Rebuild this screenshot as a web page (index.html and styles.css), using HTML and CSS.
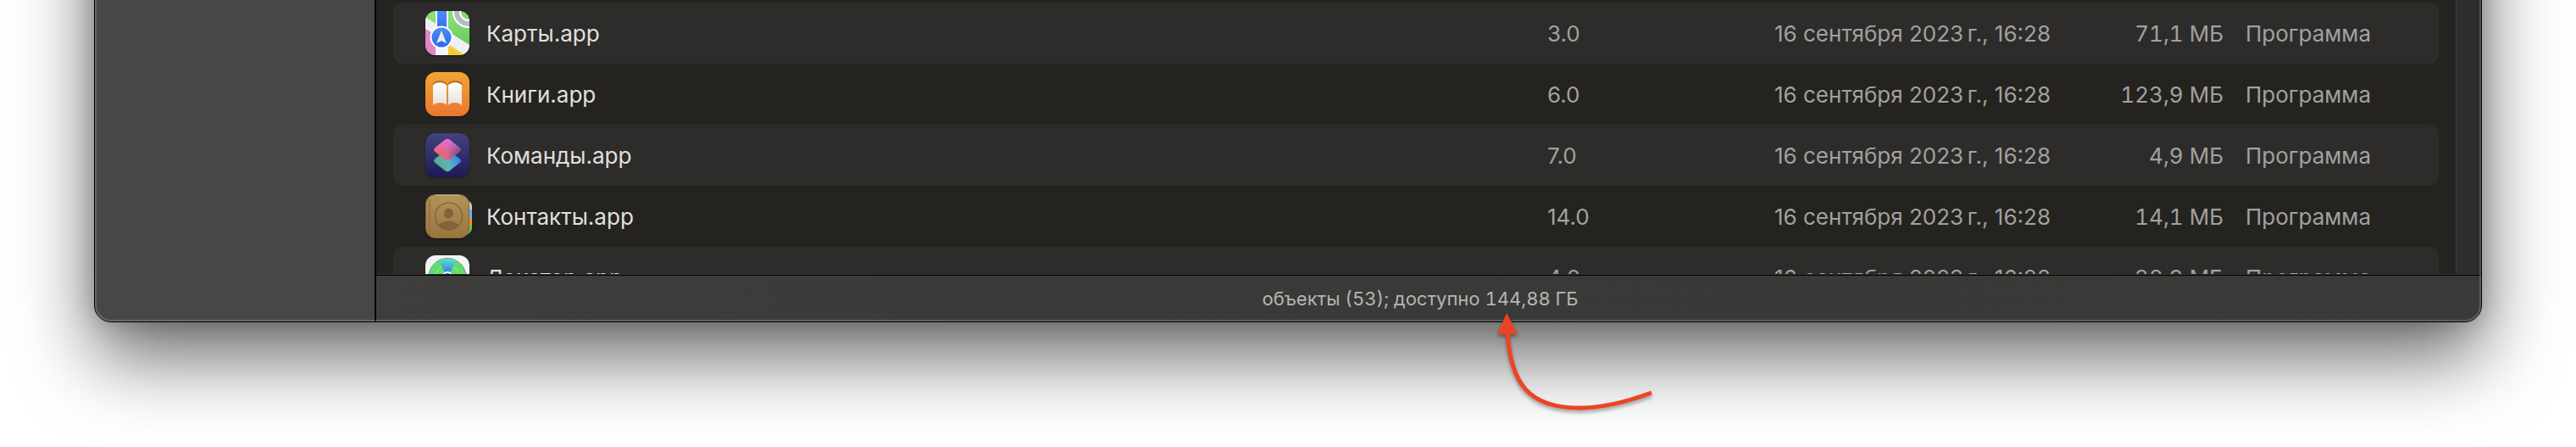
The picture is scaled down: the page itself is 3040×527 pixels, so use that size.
FILE: index.html
```html
<!DOCTYPE html>
<html lang="ru">
<head>
<meta charset="utf-8">
<title>Программы</title>
<link rel="stylesheet" href="styles.css">
</head>
<body>
<main class="window">
  <aside class="sidebar"></aside>
  <section class="content">
    <div class="browser">
      <div class="list">
        <table class="files">
          <colgroup>
            <col>
            <col class="col-version">
            <col class="col-date">
            <col class="col-size">
            <col class="col-kind">
          </colgroup>
          <tbody>
            <tr>
              <td><div class="name">
                <svg class="icon" viewBox="0 0 52 52" aria-hidden="true">
                  <defs>
                    <clipPath id="tile"><rect width="52" height="52" rx="12"/></clipPath>
                    <linearGradient id="mapGreen" x1="0" y1="0" x2="0" y2="1"><stop offset="0" stop-color="#8ee27c"/><stop offset="1" stop-color="#5fc45a"/></linearGradient>
                    <linearGradient id="mapBlue" x1="0" y1="0" x2="0" y2="1"><stop offset="0" stop-color="#4d8ff5"/><stop offset="1" stop-color="#2468f2"/></linearGradient>
                  </defs>
                  <g clip-path="url(#tile)">
                    <rect width="52" height="52" fill="url(#mapGreen)"/>
                    <path d="M26 38 48 52H26Z" fill="#f5cc38"/>
                    <path d="M0 7 52 40V52H47L0 22Z" fill="#f0eff4"/>
                    <path d="M12 0h15v52H12Z" fill="#f3f3f7"/>
                    <path d="M0 21 12 28V52H0Z" fill="#dd86c8"/>
                    <path d="M14 0h11v26H14Z" fill="url(#mapBlue)"/>
                    <circle cx="51" cy="1" r="18" fill="#b9b9c2" stroke="#fff" stroke-width="2"/>
                    <circle cx="51" cy="1" r="10" fill="#7bd96c" stroke="#fff" stroke-width="2"/>
                    <circle cx="19" cy="31" r="12.500" fill="url(#mapBlue)" stroke="#fff" stroke-width="2"/>
                    <path d="M19 23 25 38 19 35 13 38Z" fill="#ececf0"/>
                  </g>
                </svg>
                <span>Карты.app</span></div></td>
              <td>3.0</td><td>16 сентября 2023&#8239;г., 16:28</td><td class="size">71,1 МБ</td><td>Программа</td>
            </tr>
            <tr>
              <td><div class="name">
                <svg class="icon" viewBox="0 0 52 52" aria-hidden="true">
                  <defs>
                    <linearGradient id="bookTile" x1="0" y1="0" x2="0" y2="1"><stop offset="0" stop-color="#f1a535"/><stop offset="1" stop-color="#e97730"/></linearGradient>
                    <linearGradient id="page" x1="0" y1="0" x2="0" y2="1"><stop offset="0" stop-color="#fff"/><stop offset="1" stop-color="#e6e1dc"/></linearGradient>
                  </defs>
                  <rect width="52" height="52" rx="12" fill="url(#bookTile)"/>
                  <path d="M9 15c3-5 13-5 16 0M27 15c3-5 13-5 16 0" fill="none" stroke="#b8641c" stroke-width="2"/>
                  <path d="M9 16c2-5 14-5 16 0v23c-3-4-12-4-16 0ZM27 16c2-5 14-5 16 0v23c-4-4-13-4-16 0Z" fill="url(#page)"/>
                </svg>
                <span>Книги.app</span></div></td>
              <td>6.0</td><td>16 сентября 2023&#8239;г., 16:28</td><td class="size">123,9 МБ</td><td>Программа</td>
            </tr>
            <tr>
              <td><div class="name">
                <svg class="icon" viewBox="0 0 52 52" aria-hidden="true">
                  <defs>
                    <linearGradient id="cmdTile" x1="0" y1="0" x2="0" y2="1"><stop offset="0" stop-color="#42437a"/><stop offset="1" stop-color="#1d1a58"/></linearGradient>
                    <linearGradient id="cmdTop" x1="0" y1=".5" x2="1" y2=".5"><stop offset="0" stop-color="#f46a63"/><stop offset=".5" stop-color="#d9688e"/><stop offset="1" stop-color="#6c4a80"/></linearGradient>
                    <linearGradient id="cmdGlow" x1="0" y1="0" x2="0" y2="1"><stop offset="0" stop-color="#e56be8"/><stop offset=".6" stop-color="#e56be8" stop-opacity="0"/></linearGradient>
                    <linearGradient id="cmdLow" x1="0" y1=".7" x2="1" y2=".4"><stop offset="0" stop-color="#55a590"/><stop offset=".5" stop-color="#62b5b5"/><stop offset="1" stop-color="#2f7bff"/></linearGradient>
                  </defs>
                  <rect width="52" height="52" rx="12" fill="url(#cmdTile)"/>
                  <path d="M23 21.500 11.500 30q-3 2.500 0 5L23 44q3 2.500 6 0l11.500-9q3-2.500 0-5L29 21.500q-3-2-6 0Z" fill="url(#cmdLow)"/>
                  <path d="M23 8 11.500 17q-3 2.500 0 5L23 31q3 2.500 6 0l11.500-9q3-2.500 0-5L29 8q-3-2.500-6 0Z" fill="url(#cmdTop)"/>
                  <path d="M23 8 11.500 17q-3 2.500 0 5L23 31q3 2.500 6 0l11.500-9q3-2.500 0-5L29 8q-3-2.500-6 0Z" fill="url(#cmdGlow)"/>
                </svg>
                <span>Команды.app</span></div></td>
              <td>7.0</td><td>16 сентября 2023&#8239;г., 16:28</td><td class="size">4,9 МБ</td><td>Программа</td>
            </tr>
            <tr>
              <td><div class="name">
                <svg class="icon" viewBox="0 0 52 52" aria-hidden="true">
                  <defs>
                    <linearGradient id="leather" x1="0" y1="0" x2="0" y2="1"><stop offset="0" stop-color="#b2925a"/><stop offset="1" stop-color="#9c743f"/></linearGradient>
                    <clipPath id="badge"><circle cx="27.500" cy="26" r="16"/></clipPath>
                  </defs>
                  <path d="M46 6q9 2 9 8v4h-9Z" fill="#c9c9c4"/>
                  <path d="M46 18h9v10h-9Z" fill="#64b4ea"/>
                  <path d="M46 28h9v9h-9Z" fill="#ec9422"/>
                  <path d="M46 37h9v4q-1 5-9 8Z" fill="#5dc655"/>
                  <rect width="52" height="52" rx="12" fill="#86663a"/>
                  <rect x="1" y="1" width="50" height="50" rx="11" fill="url(#leather)"/>
                  <path d="M12 1h28" stroke="#c9bda0" stroke-width="1"/>
                  <path d="M5 6v40" stroke="#8e6f3f" stroke-width="1.500"/>
                  <g clip-path="url(#badge)" fill="#80653a">
                    <ellipse cx="27.500" cy="22.500" rx="5.500" ry="6"/>
                    <ellipse cx="27.500" cy="40" rx="13" ry="8.500"/>
                  </g>
                  <circle cx="27.500" cy="26" r="16" fill="none" stroke="#7b6036" stroke-width="1.200"/>
                </svg>
                <span>Контакты.app</span></div></td>
              <td>14.0</td><td>16 сентября 2023&#8239;г., 16:28</td><td class="size">14,1 МБ</td><td>Программа</td>
            </tr>
            <tr>
              <td><div class="name">
                <svg class="icon" viewBox="0 0 52 52" aria-hidden="true">
                  <defs><linearGradient id="beam" x1="0" y1="0" x2="0" y2="1"><stop offset="0" stop-color="#5fe0c8"/><stop offset="1" stop-color="#1f58f5"/></linearGradient></defs>
                  <rect width="52" height="52" rx="12" fill="#f4f4f4"/>
                  <circle cx="26" cy="25.500" r="22" fill="#63dc6c" stroke="#4fae66" stroke-width="1"/>
                  <circle cx="26" cy="25.500" r="14" fill="none" stroke="#8fee90" stroke-width="1"/>
                  <path d="M26 27 16 6q10-4 20 0Z" fill="url(#beam)"/>
                  <circle cx="26" cy="25" r="5" fill="#2563f5" stroke="#fff" stroke-width="2"/>
                </svg>
                <span>Локатор.app</span></div></td>
              <td>4.0</td><td>16 сентября 2023&#8239;г., 16:28</td><td class="size">38,9 МБ</td><td>Программа</td>
            </tr>
          </tbody>
        </table>
      </div>
      <div class="scroller"></div>
    </div>
    <footer class="status">
      <span class="status-text">объекты (53); доступно 144,88 ГБ
        <svg class="arrow" viewBox="0 0 200 130" aria-hidden="true">
          <path d="M19 29C23 88 44 117 104 117C132 117 159 110 189 99" fill="none" stroke="#ec4424" stroke-width="5"/>
          <path d="M18 5 31 30H7Z" fill="#ec4424"/>
        </svg>
      </span>
    </footer>
  </section>
</main>
</body>
</html>
```
FILE: styles.css
```css
* { box-sizing: border-box; }

body {
  display: flex;
  height: 100vh;
  margin: 0;
  padding: 0 111px 147px;
  overflow: hidden;
  background: #fff;
  font-family: Inter, "Noto Sans", sans-serif;
  font-size: 26px;
  line-height: 32px;
}

/* The top edge of the window lies above the viewport. */
.window {
  position: relative;
  display: flex;
  flex: 1;
  min-width: 0;
  margin-top: -200px;
  padding-top: 199px;
  border: 1px solid #000;
  border-radius: 20px;
  background: #474747;
  box-shadow: 0 40px 90px rgba(0, 0, 0, 0.6), 0 0 30px rgba(0, 0, 0, 0.2);
}

.window::after {
  content: "";
  position: absolute;
  inset: 0;
  border: 2px solid rgba(255, 255, 255, 0.18);
  border-radius: 19px;
  pointer-events: none;
}

.sidebar { width: 330px; }

.content {
  display: flex;
  flex: 1;
  flex-direction: column;
  min-width: 0;
  border-left: 2px solid #000;
}

.browser {
  display: flex;
  flex: 1;
  min-height: 0;
  border-bottom: 1px solid #343432;
  background: #242320;
}

.list {
  flex: 1;
  min-width: 0;
  padding: 3px 20px 0;
  overflow: hidden;
}

.scroller {
  width: 30px;
  border-left: 1px solid #414140;
  background: #2d2d2d;
}

.files {
  width: 100%;
  table-layout: fixed;
  border-collapse: separate;
  border-spacing: 0;
  color: #a1a19f;
}

.col-version { width: 268px; }
.col-date { width: 356px; }
.col-size { width: 200px; }
.col-kind { width: 241px; }

.files td {
  height: 72px;
  padding: 2px 13px 0;
  white-space: nowrap;
}

.files tr:nth-child(odd) td { background: #2d2c2a; }
.files td:first-child { padding: 0 0 0 38px; border-radius: 10px 0 0 10px; }
.files td:last-child { border-radius: 0 10px 10px 0; }

.files .size {
  text-align: right;
  font-variant-numeric: tabular-nums;
}

.name {
  display: flex;
  align-items: center;
  gap: 20px;
  color: #e0e0df;
}

.name span { padding-top: 2px; }

.icon {
  width: 52px;
  height: 52px;
  overflow: visible;
  filter: drop-shadow(0 1px 1px rgba(0, 0, 0, 0.4));
}

.status {
  display: flex;
  align-items: center;
  justify-content: center;
  height: 55px;
  padding-right: 20px;
  border-top: 1px solid #000;
  border-radius: 0 0 19px 0;
  background: linear-gradient(90deg, #3e3e3c, #3a3a38 30%, #393937 70%, #3b3a38);
  color: #b5b5b4;
  font-size: 22px;
  font-variant-numeric: tabular-nums;
}

.status-text { position: relative; }

.arrow {
  position: absolute;
  z-index: 1;
  top: 28px;
  left: calc(50% + 84px);
  width: 200px;
  height: 130px;
  filter: drop-shadow(0 3px 2px rgba(0, 0, 0, 0.35));
}
```
